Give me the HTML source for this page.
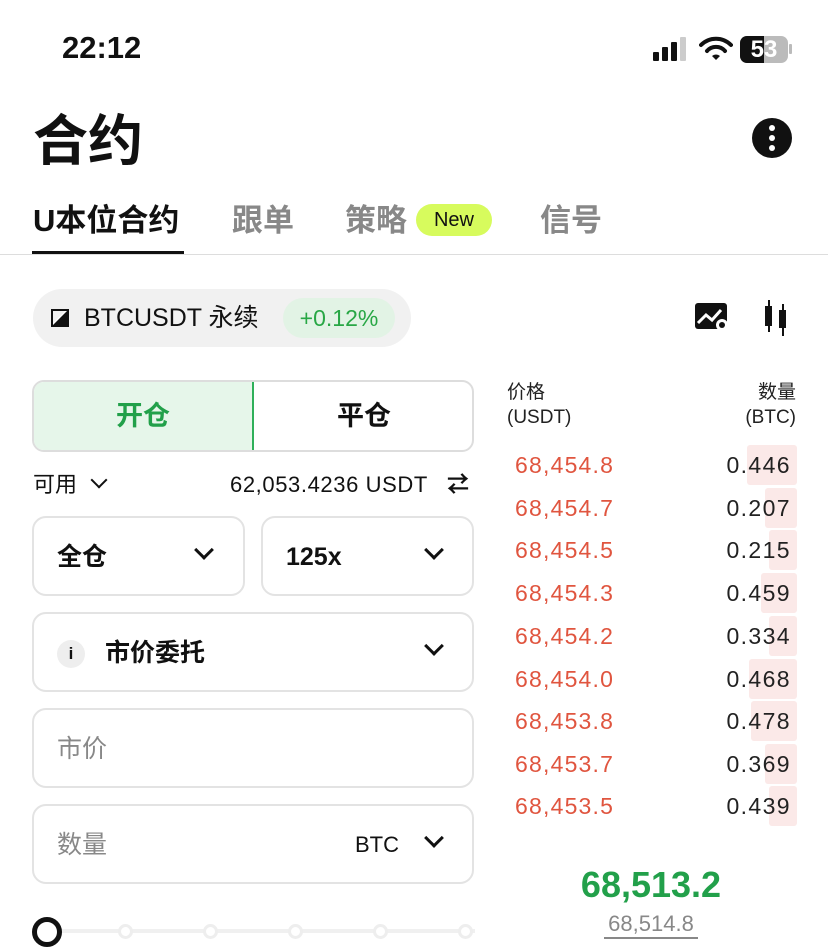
<!DOCTYPE html>
<html><head><meta charset="utf-8"><style>
*{margin:0;padding:0;box-sizing:border-box}
body{width:828px;height:951px;background:#fff;position:relative;overflow:hidden;font-family:"Liberation Sans","Noto Sans CJK SC",sans-serif;color:#111}
.a{position:absolute}
.box{position:absolute;border:2px solid #e3e3e3;border-radius:14px;background:#fff}
.chev{position:absolute;width:14px;height:14px;border-right:3px solid #111;border-bottom:3px solid #111;transform:rotate(45deg)}
.row{position:absolute;left:500px;width:300px;height:42px;font-size:23px;line-height:42px;letter-spacing:1.2px}
.row .p{position:absolute;left:15px;color:#e0553f}
.row .q{position:absolute;right:9px;color:#222;letter-spacing:1.4px}
.row .bar{position:absolute;right:3px;top:1px;height:40px;background:#fbe9e8;border-radius:3px}
</style></head><body>
<div class="a" style="left:62px;top:30px;font-size:31px;font-weight:bold">22:12</div>
<div class="a" style="left:653px;top:52px;width:6px;height:9px;background:#111;border-radius:1px"></div>
<div class="a" style="left:662px;top:47px;width:6px;height:14px;background:#111;border-radius:1px"></div>
<div class="a" style="left:671px;top:42px;width:6px;height:19px;background:#111;border-radius:1px"></div>
<div class="a" style="left:680px;top:37px;width:6px;height:24px;background:#ccc;border-radius:1px"></div>
<svg class="a" style="left:699px;top:36px" width="34" height="26" viewBox="0 0 34 26"><path d="M2 9a21 21 0 0 1 30 0" stroke="#111" stroke-width="4" fill="none" stroke-linecap="round"/><path d="M8 15a12 12 0 0 1 18 0" stroke="#111" stroke-width="4" fill="none" stroke-linecap="round"/><path d="M13 20l4 4 4-4a6 6 0 0 0-8 0z" fill="#111"/></svg>
<div class="a" style="left:740px;top:36px;width:48px;height:27px;border-radius:7px;background:#bbb;overflow:hidden"><div style="width:24px;height:27px;background:#111"></div></div>
<div class="a" style="left:740px;top:35px;width:48px;font-size:24px;font-weight:bold;text-align:center;color:#fff;line-height:29px">53</div>
<div class="a" style="left:789px;top:44px;width:3px;height:10px;background:#bbb;border-radius:1px"></div>

<div class="a" style="left:33px;top:108px;font-size:55px;font-weight:bold;line-height:66px">合约</div>
<div class="a" style="left:752px;top:118px;width:40px;height:40px;border-radius:50%;background:#111"></div>
<div class="a" style="left:769px;top:125px;width:6px;height:6px;border-radius:50%;background:#fff;box-shadow:0 10px 0 #fff,0 20px 0 #fff"></div>

<div class="a" style="left:33px;top:200px;font-size:31px;font-weight:bold;line-height:42px">U本位合约</div>
<div class="a" style="left:32px;top:251px;width:152px;height:4px;background:#111"></div>
<div class="a" style="left:232px;top:200px;font-size:31px;font-weight:bold;color:#888;line-height:42px">跟单</div>
<div class="a" style="left:345px;top:200px;font-size:31px;font-weight:bold;color:#888;line-height:42px">策略</div>
<div class="a" style="left:416px;top:204px;width:76px;height:32px;border-radius:16px;background:#d7fb5d;font-size:20px;text-align:center;line-height:32px">New</div>
<div class="a" style="left:540px;top:200px;font-size:31px;font-weight:bold;color:#888;line-height:42px">信号</div>
<div class="a" style="left:0;top:254px;width:828px;height:1px;background:#ddd"></div>

<div class="a" style="left:33px;top:289px;width:378px;height:58px;border-radius:29px;background:#f1f1f1"></div>
<svg class="a" style="left:51px;top:309px" width="18" height="18"><path d="M0 0h18v18H0z" fill="#111"/><path d="M16 2L2 16V2z" fill="#fff"/><path d="M14 2L2 14V2z" fill="#f1f1f1"/></svg>
<div class="a" style="left:84px;top:301px;font-size:25px;line-height:34px">BTCUSDT 永续</div>
<div class="a" style="left:283px;top:298px;width:112px;height:40px;border-radius:20px;background:#e2f3e5;color:#28a745;font-size:23px;text-align:center;line-height:40px">+0.12%</div>
<svg class="a" style="left:695px;top:303px" width="36" height="30"><rect x="0" y="0" width="32" height="26" rx="3" fill="#111"/><path d="M3 20l8-8 6 5 9-10" stroke="#fff" stroke-width="3" fill="none"/><circle cx="27" cy="22" r="6" fill="#fff"/><circle cx="27" cy="22" r="3" fill="#111"/></svg>
<svg class="a" style="left:762px;top:300px" width="28" height="36"><rect x="3" y="6" width="7" height="20" fill="#111"/><rect x="6" y="0" width="2" height="32" fill="#111"/><rect x="17" y="10" width="7" height="18" fill="#111"/><rect x="20" y="4" width="2" height="32" fill="#111"/></svg>

<div class="a" style="left:32px;top:380px;width:442px;height:72px;border:2px solid #ddd;border-radius:12px;overflow:hidden">
<div style="position:absolute;left:0;top:0;width:220px;height:68px;background:#e6f6ea;border-right:2px solid #2fb05a;color:#22a04a;font-size:27px;font-weight:bold;text-align:center;line-height:68px">开仓</div>
<div style="position:absolute;left:220px;top:0;width:220px;height:68px;font-size:27px;font-weight:bold;text-align:center;line-height:68px">平仓</div>
</div>
<div class="a" style="left:33px;top:470px;font-size:22px;line-height:30px">可用</div>
<div class="chev" style="left:93px;top:474px;width:12px;height:12px;border-width:2.5px"></div>
<div class="a" style="left:230px;top:470px;font-size:22px;line-height:30px;letter-spacing:0.6px">62,053.4236 USDT</div>
<div class="a" style="left:447px;top:470px;font-size:22px;font-weight:bold;line-height:30px">⇄</div>

<div class="box" style="left:32px;top:516px;width:213px;height:80px"></div>
<div class="a" style="left:57px;top:540px;font-size:25px;font-weight:bold;line-height:34px">全仓</div>
<div class="chev" style="left:197px;top:543px"></div>
<div class="box" style="left:261px;top:516px;width:213px;height:80px"></div>
<div class="a" style="left:286px;top:540px;font-size:25px;font-weight:bold;line-height:34px">125x</div>
<div class="chev" style="left:427px;top:543px"></div>

<div class="box" style="left:32px;top:612px;width:442px;height:80px"></div>
<div class="a" style="left:57px;top:640px;width:28px;height:28px;border-radius:50%;background:#eee;font-size:17px;text-align:center;line-height:28px;font-weight:bold">i</div>
<div class="a" style="left:105px;top:636px;font-size:25px;font-weight:bold;line-height:34px">市价委托</div>
<div class="chev" style="left:427px;top:639px"></div>

<div class="box" style="left:32px;top:708px;width:442px;height:80px"></div>
<div class="a" style="left:57px;top:732px;font-size:25px;color:#888;line-height:34px">市价</div>
<div class="box" style="left:32px;top:804px;width:442px;height:80px"></div>
<div class="a" style="left:57px;top:828px;font-size:25px;color:#888;line-height:34px">数量</div>
<div class="a" style="left:355px;top:830px;font-size:22px;line-height:30px">BTC</div>
<div class="chev" style="left:427px;top:831px"></div>

<div class="a" style="left:50px;top:929px;width:425px;height:4px;background:#f0f0f0"></div>
<div class="a" style="left:32px;top:917px;width:30px;height:30px;border-radius:50%;border:5px solid #111;background:#fff"></div>
<div class="a" style="left:118px;top:924px;width:15px;height:15px;border-radius:50%;border:3px solid #eee;background:#fff"></div>
<div class="a" style="left:203px;top:924px;width:15px;height:15px;border-radius:50%;border:3px solid #eee;background:#fff"></div>
<div class="a" style="left:288px;top:924px;width:15px;height:15px;border-radius:50%;border:3px solid #eee;background:#fff"></div>
<div class="a" style="left:373px;top:924px;width:15px;height:15px;border-radius:50%;border:3px solid #eee;background:#fff"></div>
<div class="a" style="left:458px;top:924px;width:15px;height:15px;border-radius:50%;border:3px solid #eee;background:#fff"></div>

<div class="a" style="left:507px;top:380px;font-size:19px;line-height:25px;color:#222">价格<br>(USDT)</div>
<div class="a" style="left:700px;top:380px;width:96px;text-align:right;font-size:19px;line-height:25px;color:#222">数量<br>(BTC)</div>

<div class="row" style="top:444px"><div class="bar" style="width:50px"></div><span class="p">68,454.8</span><span class="q">0.446</span></div>
<div class="row" style="top:487px"><div class="bar" style="width:32px"></div><span class="p">68,454.7</span><span class="q">0.207</span></div>
<div class="row" style="top:529px"><div class="bar" style="width:28px"></div><span class="p">68,454.5</span><span class="q">0.215</span></div>
<div class="row" style="top:572px"><div class="bar" style="width:36px"></div><span class="p">68,454.3</span><span class="q">0.459</span></div>
<div class="row" style="top:615px"><div class="bar" style="width:28px"></div><span class="p">68,454.2</span><span class="q">0.334</span></div>
<div class="row" style="top:658px"><div class="bar" style="width:48px"></div><span class="p">68,454.0</span><span class="q">0.468</span></div>
<div class="row" style="top:700px"><div class="bar" style="width:46px"></div><span class="p">68,453.8</span><span class="q">0.478</span></div>
<div class="row" style="top:743px"><div class="bar" style="width:32px"></div><span class="p">68,453.7</span><span class="q">0.369</span></div>
<div class="row" style="top:785px"><div class="bar" style="width:28px"></div><span class="p">68,453.5</span><span class="q">0.439</span></div>

<div class="a" style="left:550px;top:863px;width:202px;text-align:center;font-size:36px;font-weight:bold;color:#22a04a;line-height:44px">68,513.2</div>
<div class="a" style="left:560px;top:910px;width:182px;text-align:center;font-size:22px;color:#888;line-height:28px">68,514.8</div>
<div class="a" style="left:604px;top:937px;width:94px;height:2px;background:#888"></div>
</body></html>
